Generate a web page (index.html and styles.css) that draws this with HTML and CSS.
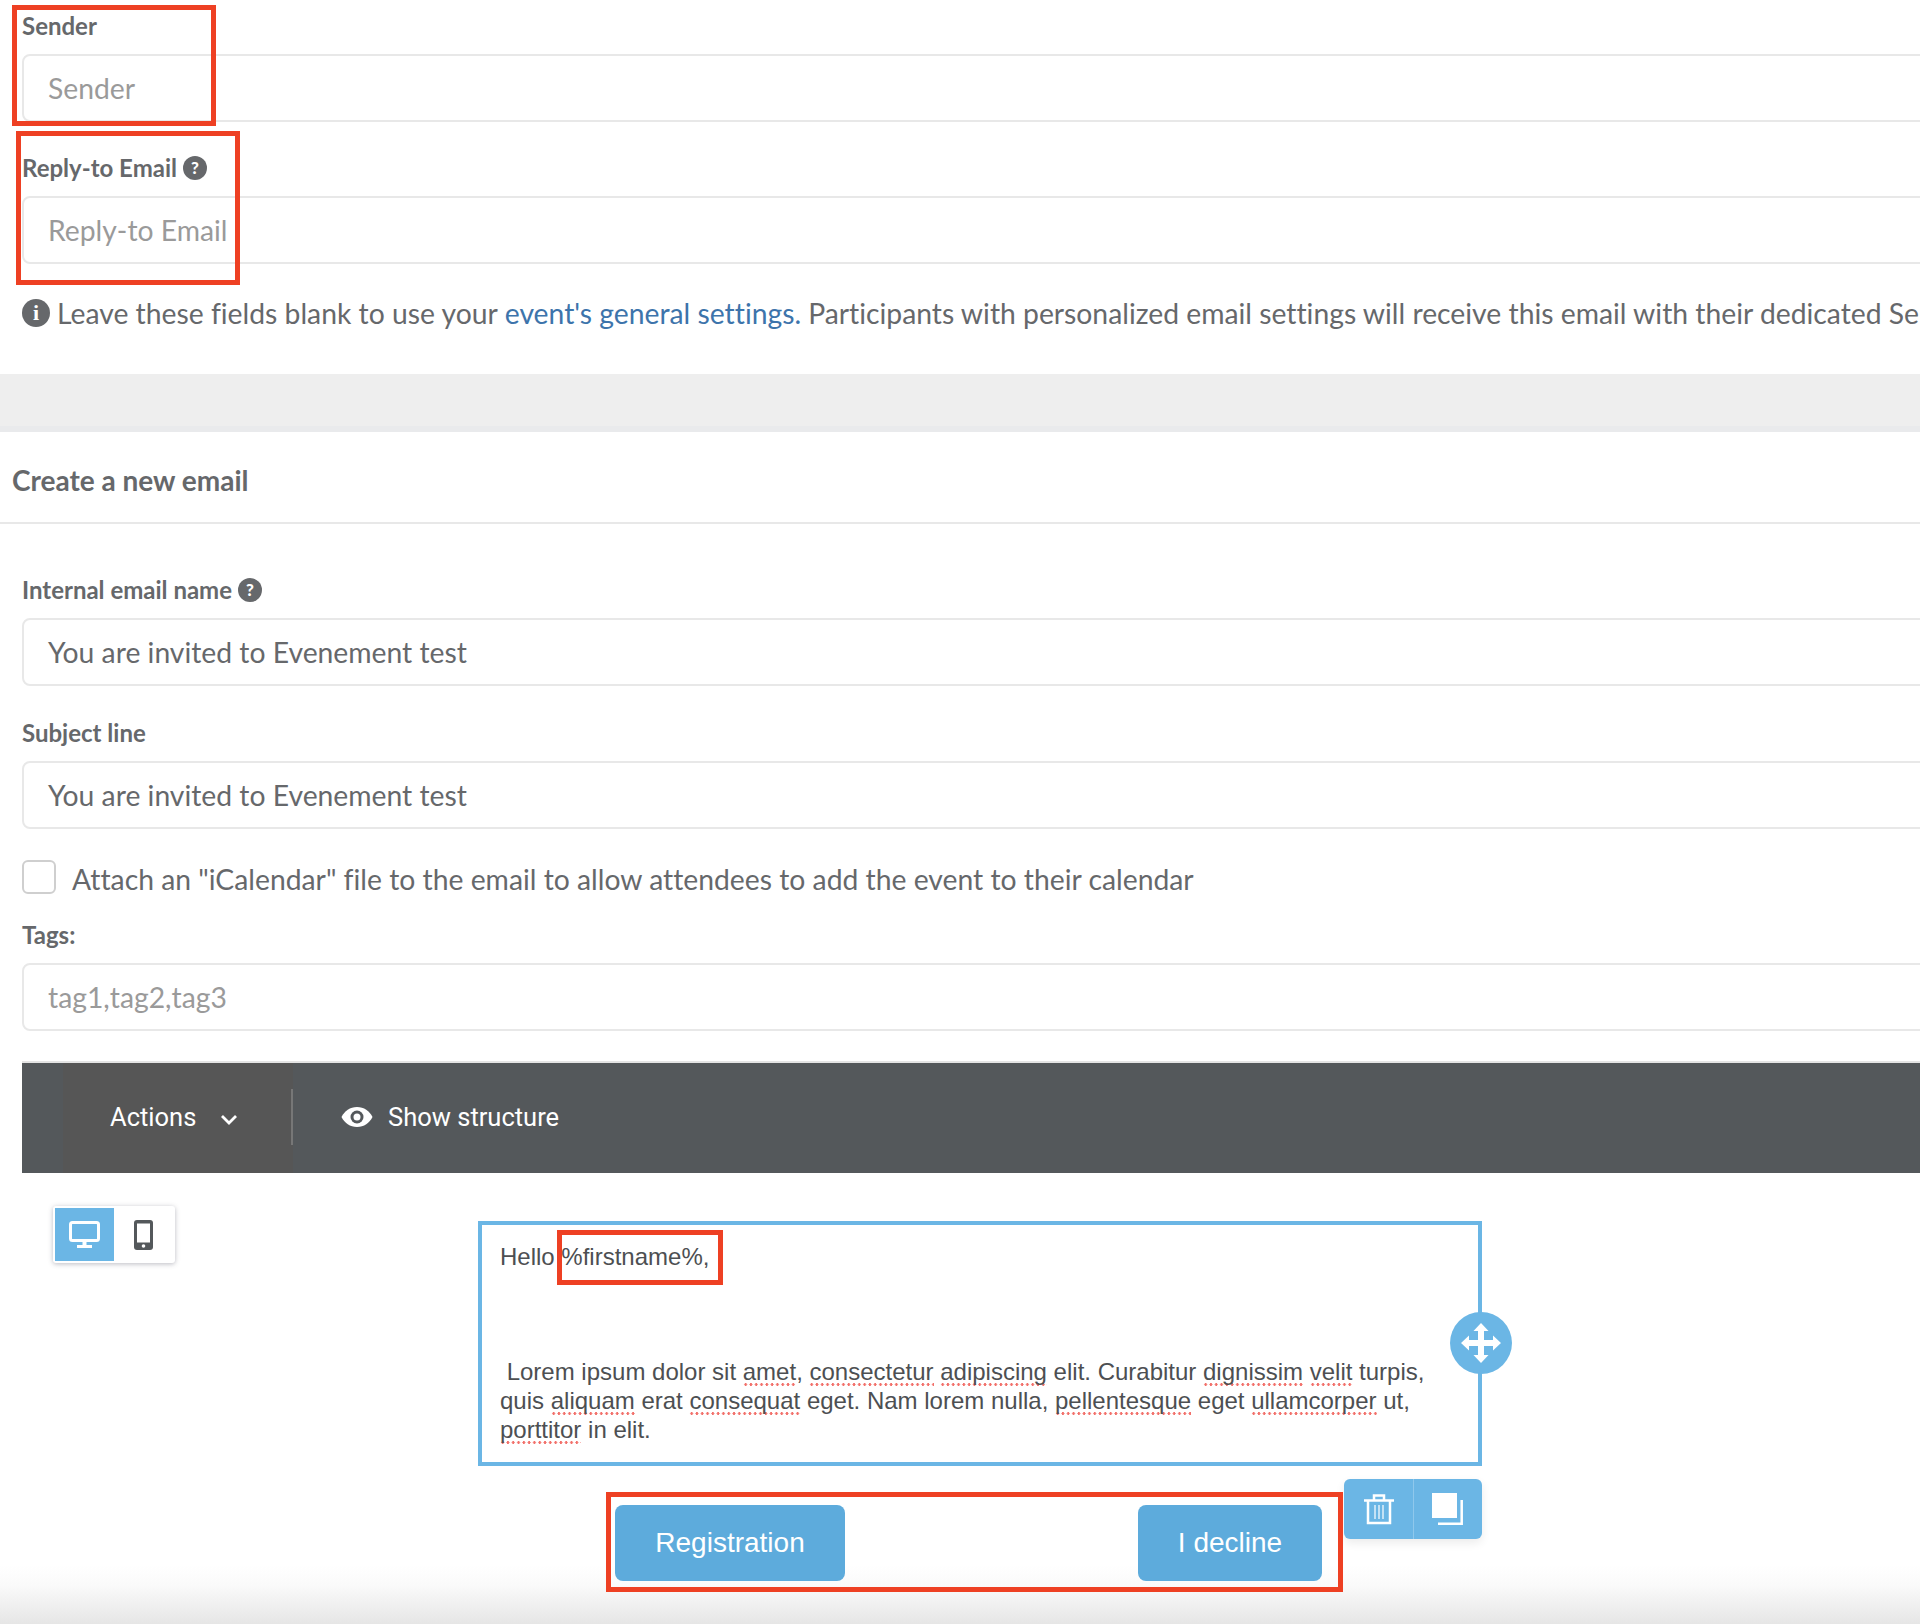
FILE: index.html
```html
<!DOCTYPE html>
<html lang="en">
<head>
<meta charset="utf-8">
<title>Create a new email</title>
<link rel="stylesheet" href="styles.css">
</head>
<body>
<div class="page">
  <section class="sender-section">
    <div class="field">
      <label class="label">Sender</label>
      <div class="input placeholder">Sender</div>
    </div>
    <div class="field">
      <label class="label">Reply-to Email <span class="help">?</span></label>
      <div class="input placeholder">Reply-to Email</div>
    </div>
    <p class="info"><span class="info-icon">i</span>Leave these fields blank to use your <a class="link">event's general settings.</a> Participants with personalized email settings will receive this email with their dedicated Sender</p>
  </section>
  <div class="band"></div>
  <h2 class="panel-title">Create a new email</h2>
  <section class="form-section">
    <div class="field">
      <label class="label">Internal email name <span class="help">?</span></label>
      <div class="input">You are invited to Evenement test</div>
    </div>
    <div class="field">
      <label class="label">Subject line</label>
      <div class="input">You are invited to Evenement test</div>
    </div>
    <div class="check-row">
      <span class="checkbox"></span>
      <span class="check-text">Attach an "iCalendar" file to the email to allow attendees to add the event to their calendar</span>
    </div>
    <div class="field">
      <label class="label">Tags:</label>
      <div class="input placeholder">tag1,tag2,tag3</div>
    </div>
  </section>
  <section class="editor">
    <div class="toolbar">
      <div class="actions">Actions
        <svg class="chevron" viewBox="0 0 18 12" width="18" height="12"><path d="M2 2l7 7 7-7" fill="none" stroke="#fff" stroke-width="2.800"/></svg>
      </div>
      <div class="structure">
        <svg class="eye" viewBox="0 0 32 22" width="32" height="22"><path fill="#fff" d="M16 1C9 1 3.500 5 .5 11c3 6 8.500 10 15.500 10s12.500-4 15.500-10C28.500 5 23 1 16 1z"/><circle cx="16" cy="11" r="6.500" fill="#54585b"/><circle cx="16" cy="11" r="3.500" fill="#fff"/></svg>
        Show structure
      </div>
    </div>
    <div class="canvas">
      <div class="devices">
        <span class="device device-on">
          <svg viewBox="0 0 31 27" width="31" height="27"><rect x="1.500" y="1.500" width="28" height="18" rx="2" fill="none" stroke="#fff" stroke-width="3"/><path d="M13.500 20h4v4h-4zM8 24h15v3H8z" fill="#fff"/></svg>
        </span>
        <span class="device">
          <svg viewBox="0 0 19 30" width="19" height="30"><rect x="0" y="0" width="19" height="30" rx="3" fill="#54585b"/><rect x="3" y="3.500" width="13" height="19" fill="#fff"/><circle cx="9.500" cy="26" r="1.800" fill="#fff"/></svg>
        </span>
      </div>
      <div class="email">
        <div class="text-block">
          <p>Hello %firstname%,</p>
          <p class="lorem">&nbsp;Lorem ipsum dolor sit <span class="sp">amet</span>, <span class="sp">consectetur</span> <span class="sp">adipiscing</span> elit. Curabitur <span class="sp">dignissim</span> <span class="sp">velit</span> turpis, quis <span class="sp">aliquam</span> erat <span class="sp">consequat</span> eget. Nam lorem nulla, <span class="sp">pellentesque</span> eget <span class="sp">ullamcorper</span> ut, <span class="sp">porttitor</span> in elit.</p>
          <span class="move">
            <svg viewBox="0 0 40 40" width="40" height="40"><path fill="#fff" d="M20 0l7.500 8H23v9h9v-4.500l8 7.500-8 7.500V23h-9v9h4.500L20 40l-7.500-8H17v-9H8v4.500L0 20l8-7.500V17h9V8h-4.500z"/></svg>
          </span>
        </div>
        <div class="button-row">
          <a class="cta cta-first">Registration</a>
          <a class="cta cta-second">I decline</a>
          <div class="block-tools">
            <span class="tool">
              <svg viewBox="0 0 32 32" width="32" height="32"><path fill="none" stroke="#fff" stroke-width="2.500" d="M1 7.500h30M11 7V2.500h10V7M5 8v22h22V8"/><path fill="none" stroke="#fff" stroke-width="1.200" d="M12 12v14M16 12v14M20 12v14"/></svg>
            </span>
            <span class="tool">
              <svg viewBox="0 0 32 32" width="32" height="32"><path fill="#fff" d="M0 0h25v25H0z"/><path fill="none" stroke="#fff" stroke-width="2.500" d="M29.700 7v23.700H6"/></svg>
            </span>
          </div>
        </div>
      </div>
    </div>
  </section>
  <span class="mark mark-sender"></span>
  <span class="mark mark-reply"></span>
  <span class="mark mark-name"></span>
  <span class="mark mark-buttons"></span>
</div>
</body>
</html>
```
FILE: styles.css
```css
* { box-sizing: border-box; }
html, body { margin: 0; padding: 0; }
body { width: 1920px; height: 1624px; overflow: hidden; background: #fff; font-family: "Lato", "Open Sans", sans-serif; font-variant-ligatures: none; color: #66686b; }
.page { position: relative; width: 1920px; height: 1624px; overflow: hidden; background: linear-gradient(to bottom, #fff 0, #fff 1565px, #fafafa 1585px, #e6e6e6 1624px); }
.sender-section { padding: 12px 0 0 22px; height: 374px; background: #fff; }
.field { margin-bottom: 32px; }
.label { display: flex; align-items: center; gap: 6px; height: 30px; margin-bottom: 12px; padding-bottom: 3px; font-size: 24px; font-weight: 700; white-space: nowrap; }
.help { display: inline-flex; align-items: center; justify-content: center; flex: none; width: 24px; height: 24px; border-radius: 50%; background: #66686b; color: #fff; font-size: 17px; font-weight: 900; }
.input { width: 1960px; height: 68px; padding-left: 24px; border: 2px solid #e8e8e8; border-radius: 8px; font-size: 28.300px; line-height: 64px; white-space: nowrap; background: #fff; }
.placeholder { color: #9a9a9a; }
.info { display: flex; align-items: center; margin: 3px 0 0; font-size: 28.300px; white-space: nowrap; }
.info-icon { flex: none; display: inline-flex; align-items: center; justify-content: center; width: 28px; height: 28px; margin-right: 7px; border-radius: 50%; background: #66686b; color: #fff; font-family: "Liberation Serif", serif; font-size: 22px; font-weight: 700; }
.link { color: #3d74ab; margin: 0 7px; }
.band { height: 58px; background: #eeeeee; border-bottom: 6px solid #e9eaec; }
.panel-title { display: flex; align-items: center; height: 92px; margin: 0; padding: 6px 0 0 12px; border-bottom: 2px solid #e8e8e8; font-size: 28px; font-weight: 700; background: #fff; }
.form-section { padding: 52px 0 0 22px; height: 537px; background: #fff; }
.form-section .field { margin-bottom: 33px; }
.check-row { display: flex; align-items: center; gap: 16px; height: 34px; margin: -2px 0 27px; font-size: 28.300px; white-space: nowrap; }
.check-text { padding-top: 4px; }
.checkbox { flex: none; width: 34px; height: 34px; border: 2px solid #cfcfcf; border-radius: 6px; }
.editor { margin-left: 22px; }
.toolbar { display: flex; align-items: stretch; height: 112px; border-top: 2px solid #e4e4e4; background: #54585b; color: #fff; font-family: "Roboto", sans-serif; font-size: 25.500px; }
.actions { position: relative; display: flex; align-items: center; gap: 24px; width: 230px; margin-left: 41px; padding: 0 0 2px 47px; background: #565656; }
.actions::after { content: ""; position: absolute; right: 0; top: 26px; bottom: 28px; width: 2px; background: #777; }
.chevron { margin-top: 5px; }
.structure { display: flex; align-items: center; gap: 15px; padding: 0 0 2px 48px; }
.canvas { position: relative; height: 451px; }
.devices { position: absolute; left: 31px; top: 33px; display: flex; width: 122px; height: 57px; padding: 2px; background: #fff; border-radius: 3px; box-shadow: 0 1px 5px rgba(60, 60, 80, .35); }
.device { display: flex; align-items: center; justify-content: center; width: 59px; }
.device-on { background: #6bb6e5; }
.email { position: absolute; left: 456px; top: 48px; width: 1004px; }
.text-block { position: relative; height: 245px; padding: 17px 18px 0; border: 4px solid #6bb6e5; background: #fff; font-family: "Liberation Sans", Arial, sans-serif; font-size: 24px; line-height: 29px; color: #4d4f52; }
.text-block p { margin: 0; }
.text-block .lorem { margin-top: 86px; }
.sp { padding-bottom: 1px; background: radial-gradient(circle at center, #f2706a 1.200px, transparent 1.600px) left bottom / 5.300px 3px repeat-x; }
.move { position: absolute; right: -34px; top: 87px; display: flex; align-items: center; justify-content: center; width: 62px; height: 62px; border-radius: 50%; background: #6bb6e5; }
.button-row { position: relative; display: flex; margin-top: 39px; height: 76px; padding-left: 137px; }
.cta { display: flex; align-items: center; justify-content: center; height: 76px; border-radius: 8px; background: #5dabdc; color: #fff; font-family: "Liberation Sans", Arial, sans-serif; font-size: 28px; }
.cta-first { width: 230px; margin-right: 293px; }
.cta-second { width: 184px; }
.block-tools { position: absolute; right: 0; top: -26px; display: flex; width: 138px; height: 60px; border-radius: 6px; background: #6bb6e5; box-shadow: 0 4px 10px rgba(0, 0, 0, .08); }
.tool { display: flex; align-items: center; justify-content: center; width: 69px; }
.tool + .tool { border-left: 1px solid #8fc8ec; }
.mark { position: absolute; border: 5px solid #ee4023; pointer-events: none; }
.mark-sender { left: 12px; top: 5px; width: 204px; height: 121px; }
.mark-reply { left: 16px; top: 131px; width: 224px; height: 154px; }
.mark-name { left: 557px; top: 1230px; width: 166px; height: 55px; }
.mark-buttons { left: 606px; top: 1492px; width: 737px; height: 100px; }
```
